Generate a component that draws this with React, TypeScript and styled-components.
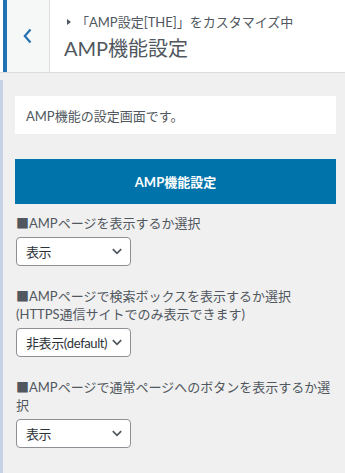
import styled, { createGlobalStyle } from 'styled-components';

const GlobalStyle = createGlobalStyle`
  html, body {
    margin: 0;
    padding: 0;
    background: #f0f0f0;
  }
  body {
    font-family: "Lato", "Noto Sans CJK JP", sans-serif;
    font-size: 13px;
    color: #50575e;
  }
  * {
    box-sizing: border-box;
  }
`;

interface Field {
  label: string;
  value: string;
}

const fields: Field[] = [
  { label: '■AMPページを表示するか選択', value: '表示' },
  {
    label: '■AMPページで検索ボックスを表示するか選択 (HTTPS通信サイトでのみ表示できます)',
    value: '非表示(default)',
  },
  { label: '■AMPページで通常ページへのボタンを表示するか選択', value: '表示' },
];

const App = () => {
  return (
    <>
      <GlobalStyle />
      <Page>
        <Header>
          <BackButton aria-label="戻る">
            <svg width="9" height="16" viewBox="0 0 9 16">
              <path d="M7.5 1.5 L1.8 8 L7.5 14.5" fill="none" stroke="#2271b1" strokeWidth="2.2" />
            </svg>
          </BackButton>
          <TitleBlock>
            <Breadcrumb>
              <Arrow />
              「AMP設定[THE]」をカスタマイズ中
            </Breadcrumb>
            <Title>AMP機能設定</Title>
          </TitleBlock>
        </Header>
        <Body>
          <Strip />
          <Content>
            <Description>AMP機能の設定画面です。</Description>
            <SectionButton>AMP機能設定</SectionButton>
            {fields.map((field, i) => (
              <Control key={i} first={i === 0}>
                <Label>{field.label}</Label>
                <Select>
                  <SelectValue>{field.value}</SelectValue>
                  <svg width="10" height="7" viewBox="0 0 10 7">
                    <path d="M0.8 1.2 L5 5.4 L9.2 1.2" fill="none" stroke="#50575e" strokeWidth="1.7" />
                  </svg>
                </Select>
              </Control>
            ))}
          </Content>
        </Body>
      </Page>
    </>
  );
};

export default App;

const Page = styled.div`
  width: 345px;
  min-height: 473px;
  display: flex;
  flex-direction: column;
`;

const Header = styled.div`
  display: flex;
  height: 73px;
  padding-left: 3px;
  background: #fff;
  border-bottom: 1px solid #dcdcde;
`;

const BackButton = styled.div`
  width: 47px;
  display: flex;
  align-items: center;
  justify-content: center;
  padding-right: 2px;
  background: #f6f7f7;
  border-left: 4px solid #2271b1;
  border-right: 1px solid #dcdcde;
`;

const TitleBlock = styled.div`
  display: flex;
  flex-direction: column;
  padding: 12px 0 0 14px;
`;

const Breadcrumb = styled.div`
  display: flex;
  align-items: center;
  font-size: 13px;
  line-height: 20px;
  color: #50575e;
  white-space: nowrap;
`;

const Arrow = styled.span`
  width: 0;
  height: 0;
  margin: 0 5px 0 3px;
  border-left: 4px solid #50575e;
  border-top: 3px solid transparent;
  border-bottom: 3px solid transparent;
`;

const Title = styled.div`
  font-size: 20px;
  line-height: 28px;
  margin-top: 2px;
  color: #50575e;
  font-weight: 400;
`;

const Body = styled.div`
  flex: 1;
  display: flex;
  padding-top: 7px;
`;

const Strip = styled.div`
  width: 3px;
  background: #c8d2e4;
`;

const Content = styled.div`
  flex: 1;
  padding: 16px 9px 20px 12px;
  display: flex;
  flex-direction: column;
`;

const Description = styled.div`
  height: 38px;
  display: flex;
  align-items: center;
  padding-left: 11px;
  background: #fff;
  color: #50575e;
`;

const SectionButton = styled.div`
  margin-top: 25px;
  height: 45px;
  display: flex;
  align-items: center;
  justify-content: center;
  background: #0073aa;
  color: #fff;
  font-weight: 700;
  font-size: 13px;
`;

const Control = styled.div<{ first: boolean }>`
  margin-top: ${(p) => (p.first ? '10px' : '21px')};
  padding-left: 1px;
  display: flex;
  flex-direction: column;
  gap: 4px;
`;

const Label = styled.div`
  line-height: 18.5px;
  color: #50575e;
`;

const Select = styled.div`
  width: 115px;
  height: 29px;
  display: flex;
  align-items: center;
  justify-content: space-between;
  gap: 5px;
  padding: 0 8px 0 9px;
  background: #fff;
  border: 1px solid #8c8f94;
  border-radius: 4px;
  color: #2c3338;
  white-space: nowrap;

  svg {
    flex-shrink: 0;
  }
`;

const SelectValue = styled.span`
  letter-spacing: -0.4px;
`;
